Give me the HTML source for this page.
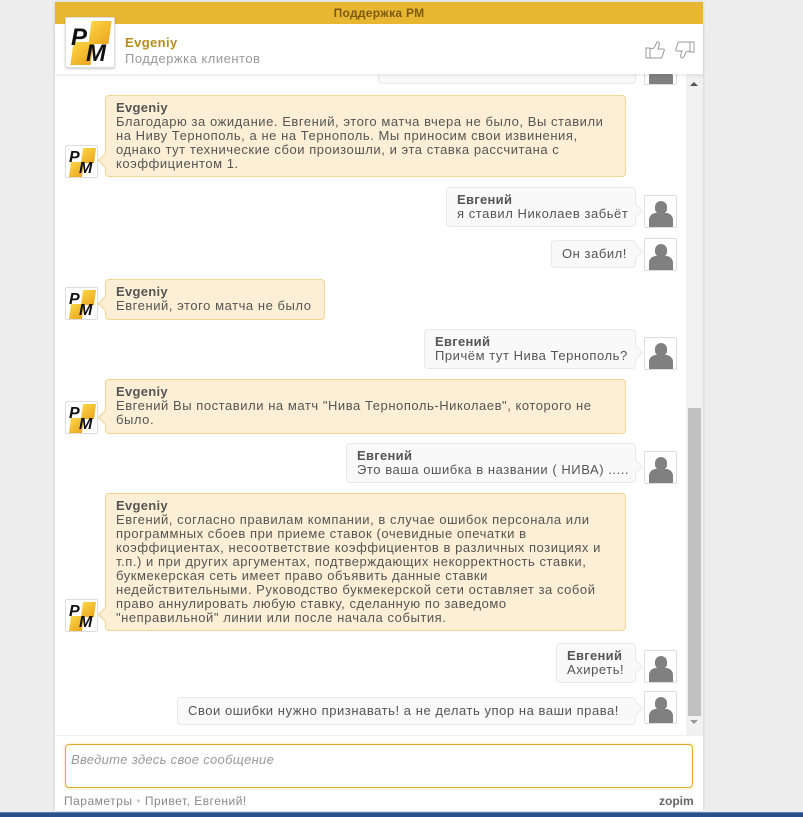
<!DOCTYPE html>
<html><head><meta charset="utf-8"><style>
*{margin:0;padding:0;box-sizing:border-box}
body{width:803px;height:817px;background:#ededed;position:relative;overflow:hidden;font-family:"Liberation Sans","DejaVu Sans",sans-serif;font-size:13px;color:#555}
.abs{position:absolute}
#panel{left:55px;top:2px;width:648px;height:809px;background:#fff;box-shadow:0 0 3px rgba(0,0,0,.15)}
#bar{left:55px;top:2px;width:648px;height:22px;background:#e8b731;color:#7b5b12;font-weight:bold;font-size:12px;text-align:center;line-height:23px;letter-spacing:.3px}
#head{left:55px;top:24px;width:648px;height:50px;background:#fff;box-shadow:0 2px 3px rgba(0,0,0,.08);z-index:3}
.logo{background:#fff;border:1px solid #ddd;border-radius:2px;overflow:hidden}
.logo .y1,.logo .y2{position:absolute;background:linear-gradient(135deg,#fbd546,#eca51c);transform:skewX(-8deg)}
.logo span{position:absolute;font-weight:bold;font-style:italic;color:#111;font-family:"Liberation Sans",sans-serif}
.b{position:absolute;border-radius:4px;padding:4px 10px 5px;line-height:14px;font-size:13px;letter-spacing:.55px;white-space:nowrap}
.a{background:#fcefd5;border:1px solid #f1d690}
.u{background:#f9f9f9;border:1px solid #e9e9e9}
.b b{color:#555;display:block;letter-spacing:.3px;line-height:15px}
.a:before{content:"";position:absolute;left:-6px;bottom:10px;width:10px;height:10px;background:#fcefd5;border-left:1px solid #f1d690;border-bottom:1px solid #f1d690;transform:rotate(45deg)}
.u:after{content:"";position:absolute;right:-6px;bottom:10px;width:10px;height:10px;background:#f9f9f9;border-right:1px solid #e9e9e9;border-top:1px solid #e9e9e9;transform:rotate(45deg)}
.s{padding-top:6px}
.av{position:absolute;width:33px;height:33px;border:1px solid #ddd;background:#fff;border-radius:2px;overflow:hidden}
.av i{position:absolute;left:10px;top:5px;width:12px;height:13px;border-radius:6px 6px 5px 5px;background:#808080}
.av em{position:absolute;left:4px;top:17px;width:24px;height:14px;background:#808080;border-radius:7px 7px 0 0}
</style></head><body>
<div id="panel" class="abs"></div>
<div id="bar" class="abs">Поддержка РМ</div>
<div id="head" class="abs">
  <div class="abs logo" style="left:10px;top:-7px;width:50px;height:51px;box-shadow:0 1px 2px rgba(0,0,0,.2)">
    <div class="y1" style="left:24px;top:3px;width:20px;height:23px"></div>
    <div class="y2" style="left:6px;top:24px;width:20px;height:23px"></div>
    <span style="left:5px;top:6px;font-size:24px">P</span>
    <span style="left:20px;top:22px;font-size:24px">M</span>
  </div>
  <div class="abs" style="left:70px;top:11px;color:#b98d1a;font-weight:bold;font-size:13px;letter-spacing:.4px">Evgeniy</div>
  <div class="abs" style="left:70px;top:27px;color:#999;font-size:13px;letter-spacing:.5px">Поддержка клиентов</div>
  <svg class="abs" style="left:590px;top:16px" width="50" height="20" viewBox="0 0 50 20"><path d="M1 8h4v10H1zM5 9l4-1 3-6c2 0 3 1 2 4l-1 3h5c1 0 2 1 1 2l-2 6c0 1-1 1-2 1H5" fill="none" stroke="#999" stroke-width="1"/><path d="M45 2h4v10h-4zM45 11l-4 1-3 6c-2 0-3-1-2-4l1-3h-5c-1 0-2-1-1-2l2-6c0-1 1-1 2-1h10" fill="none" stroke="#999" stroke-width="1"/></svg>
</div>
<div class="abs" style="left:686px;top:74px;width:17px;height:661px;background:#f1f1f1"></div>
<div class="abs" style="left:688px;top:408px;width:13px;height:308px;background:#c1c1c1"></div>
<div class="abs" style="left:690px;top:82px;width:0;height:0;border-left:4px solid transparent;border-right:4px solid transparent;border-bottom:4px solid #555"></div>
<div class="abs" style="left:690px;top:720px;width:0;height:0;border-left:4px solid transparent;border-right:4px solid transparent;border-top:4px solid #999"></div>

<div class="b u" style="left:378px;top:60px;width:258px;height:24px;border-radius:0 0 4px 4px;z-index:1"></div>
<div class="av" style="left:644px;top:52px;height:33px;z-index:1"><i></i><em></em></div>

<div class="b a" style="left:105px;top:95px;width:521px;height:82px"><b>Evgeniy</b>Благодарю за ожидание. Евгений, этого матча вчера не было, Вы ставили<br>на Ниву Тернополь, а не на Тернополь. Мы приносим свои извинения,<br>однако тут технические сбои произошли, и эта ставка рассчитана с<br>коэффициентом 1.</div>
<div class="abs logo" style="left:65px;top:145px;width:33px;height:33px"><div class="y1" style="left:16px;top:2px;width:13px;height:15px"></div><div class="y2" style="left:4px;top:16px;width:13px;height:15px"></div><span style="left:3px;top:3px;font-size:16px">P</span><span style="left:13px;top:14px;font-size:16px">M</span></div>

<div class="b u" style="left:446px;top:187px;width:190px;height:40px"><b>Евгений</b>я ставил Николаев забьёт</div>
<div class="av" style="left:644px;top:195px"><i></i><em></em></div>

<div class="b u s" style="left:551px;top:240px;width:85px;height:28px">Он забил!</div>
<div class="av" style="left:644px;top:238px"><i></i><em></em></div>

<div class="b a" style="left:105px;top:279px;width:220px;height:41px"><b>Evgeniy</b>Евгений, этого матча не было</div>
<div class="abs logo" style="left:65px;top:287px;width:33px;height:33px"><div class="y1" style="left:16px;top:2px;width:13px;height:15px"></div><div class="y2" style="left:4px;top:16px;width:13px;height:15px"></div><span style="left:3px;top:3px;font-size:16px">P</span><span style="left:13px;top:14px;font-size:16px">M</span></div>

<div class="b u" style="left:424px;top:329px;width:212px;height:40px"><b>Евгений</b>Причём тут Нива Тернополь?</div>
<div class="av" style="left:644px;top:337px"><i></i><em></em></div>

<div class="b a" style="left:105px;top:379px;width:521px;height:55px"><b>Evgeniy</b>Евгений Вы поставили на матч "Нива Тернополь-Николаев", которого не<br>было.</div>
<div class="abs logo" style="left:65px;top:401px;width:33px;height:33px"><div class="y1" style="left:16px;top:2px;width:13px;height:15px"></div><div class="y2" style="left:4px;top:16px;width:13px;height:15px"></div><span style="left:3px;top:3px;font-size:16px">P</span><span style="left:13px;top:14px;font-size:16px">M</span></div>

<div class="b u" style="left:346px;top:443px;width:290px;height:40px"><b>Евгений</b>Это ваша ошибка в названии ( НИВА) .....</div>
<div class="av" style="left:644px;top:451px"><i></i><em></em></div>

<div class="b a" style="left:105px;top:493px;width:521px;height:138px"><b>Evgeniy</b>Евгений, согласно правилам компании, в случае ошибок персонала или<br>программных сбоев при приеме ставок (очевидные опечатки в<br>коэффициентах, несоответствие коэффициентов в различных позициях и<br>т.п.) и при других аргументах, подтверждающих некорректность ставки,<br>букмекерская сеть имеет право объявить данные ставки<br>недействительными. Руководство букмекерской сети оставляет за собой<br>право аннулировать любую ставку, сделанную по заведомо<br>"неправильной" линии или после начала события.</div>
<div class="abs logo" style="left:65px;top:599px;width:33px;height:33px"><div class="y1" style="left:16px;top:2px;width:13px;height:15px"></div><div class="y2" style="left:4px;top:16px;width:13px;height:15px"></div><span style="left:3px;top:3px;font-size:16px">P</span><span style="left:13px;top:14px;font-size:16px">M</span></div>

<div class="b u" style="left:556px;top:643px;width:80px;height:40px"><b>Евгений</b>Ахиреть!</div>
<div class="av" style="left:644px;top:650px"><i></i><em></em></div>

<div class="b u s" style="left:177px;top:697px;width:459px;height:28px">Свои ошибки нужно признавать! а не делать упор на ваши права!</div>
<div class="av" style="left:644px;top:691px"><i></i><em></em></div>

<div class="abs" style="left:55px;top:735px;width:648px;height:1px;background:#eee"></div>
<div class="abs" style="left:65px;top:744px;width:628px;height:44px;border:1px solid #e3a92a;border-radius:4px;box-shadow:0 0 3px rgba(232,183,49,.4);color:#999;font-style:italic;font-size:13px;padding:7px 5px;letter-spacing:.3px">Введите здесь свое сообщение</div>
<div class="abs" style="left:64px;top:794px;color:#888;font-size:12px;letter-spacing:.5px">Параметры <span style="color:#ccc">•</span> Привет, Евгений!</div>
<div class="abs" style="left:659px;top:794px;color:#666;font-size:12px;font-weight:bold">zopim</div>
<div class="abs" style="left:0;top:812px;width:803px;height:5px;background:#2a4f8c;border-top:1px solid #5d7fb8"></div>
</body></html>
